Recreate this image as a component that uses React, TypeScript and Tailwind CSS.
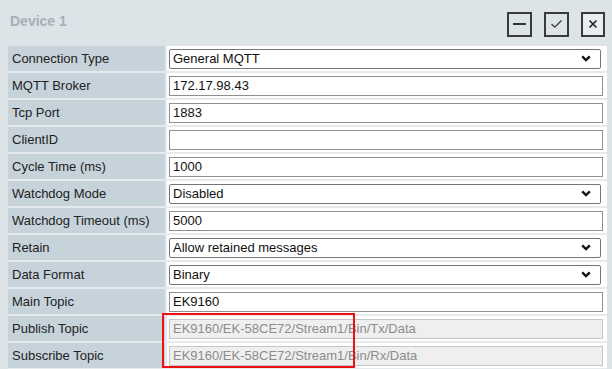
import React from "react";

type Row = {
  label: string;
  value: string;
  kind: "input" | "select" | "disabled";
};

const rows: Row[] = [
  { label: "Connection Type", value: "General MQTT", kind: "select" },
  { label: "MQTT Broker", value: "172.17.98.43", kind: "input" },
  { label: "Tcp Port", value: "1883", kind: "input" },
  { label: "ClientID", value: "", kind: "input" },
  { label: "Cycle Time (ms)", value: "1000", kind: "input" },
  { label: "Watchdog Mode", value: "Disabled", kind: "select" },
  { label: "Watchdog Timeout (ms)", value: "5000", kind: "input" },
  { label: "Retain", value: "Allow retained messages", kind: "select" },
  { label: "Data Format", value: "Binary", kind: "select" },
  { label: "Main Topic", value: "EK9160", kind: "input" },
  { label: "Publish Topic", value: "EK9160/EK-58CE72/Stream1/Bin/Tx/Data", kind: "disabled" },
  { label: "Subscribe Topic", value: "EK9160/EK-58CE72/Stream1/Bin/Rx/Data", kind: "disabled" },
];

const Chevron = () => (
  <svg width="10" height="7" viewBox="0 0 10 7" className="shrink-0">
    <path d="M1.2 1.4 L5 5 L8.8 1.4" fill="none" stroke="#111" strokeWidth="2.4" />
  </svg>
);

const Field = ({ row }: { row: Row }) => {
  if (row.kind === "select") {
    return (
      <div className="w-[432px] h-[20px] border border-[#767676] rounded-[2px] bg-white flex items-center justify-between pl-[3px] pr-[9px] text-[13px] text-[#111]">
        <span>{row.value}</span>
        <Chevron />
      </div>
    );
  }
  if (row.kind === "disabled") {
    return (
      <div className="w-[434px] h-[20px] border border-[#c6c6c6] bg-[#efefef] flex items-center pl-[3px] text-[13px] text-[#8c8c8c]">
        {row.value}
      </div>
    );
  }
  return (
    <div className="w-[434px] h-[20px] border border-[#8f8f8f] bg-white flex items-center pl-[3px] text-[13px] text-[#111]">
      {row.value}
    </div>
  );
};

const App = () => {
  return (
    <div
      className="relative w-[612px] h-[369px] overflow-hidden bg-[#dde4e8]"
      style={{ fontFamily: '"Liberation Sans", Arial, sans-serif' }}
    >
      {/* Header */}
      <div className="h-[46px] flex items-center justify-between pl-[10px] pr-[7px] pt-[2px]">
        <span className="text-[14px] font-bold text-[#a5afb6] mb-[6px]">Device 1</span>
        <div className="flex items-center gap-[12px]">
          <button className="w-[25px] h-[25px] border-2 border-[#3a3a3a] flex items-center justify-center">
            <span className="block w-[13px] h-[2px] bg-[#333]" />
          </button>
          <button className="w-[25px] h-[25px] border-2 border-[#3a3a3a] flex items-center justify-center">
            <svg width="13" height="10" viewBox="0 0 13 10">
              <path d="M1.5 5 L4.8 8.2 L11.5 1.5" fill="none" stroke="#333" strokeWidth="1.2" />
            </svg>
          </button>
          <button className="w-[24px] h-[25px] border-2 border-[#3a3a3a] bg-[#e9edef] flex items-center justify-center">
            <svg width="10" height="10" viewBox="0 0 10 10">
              <path d="M1.5 1.5 L8.5 8.5 M8.5 1.5 L1.5 8.5" fill="none" stroke="#222" strokeWidth="1.6" />
            </svg>
          </button>
        </div>
      </div>

      {/* Table */}
      <div className="ml-[8px] w-[599px] flex flex-col">
        {rows.map((row) => (
          <div key={row.label} className="flex h-[27px] border-b-2 border-[#e4eaed]">
            <div className="w-[157px] bg-[#c7d3db] flex items-center pl-[4px] text-[13px] text-[#222]">
              {row.label}
            </div>
            <div className="flex-1 bg-white border-l-2 border-[#e4eaed] flex items-center pl-[2px]">
              <Field row={row} />
            </div>
          </div>
        ))}
      </div>

      {/* Annotation */}
      <div className="absolute left-[162px] top-[313px] w-[193px] h-[55px] border-2 border-[#ee1111]" />
    </div>
  );
};

export default App;
